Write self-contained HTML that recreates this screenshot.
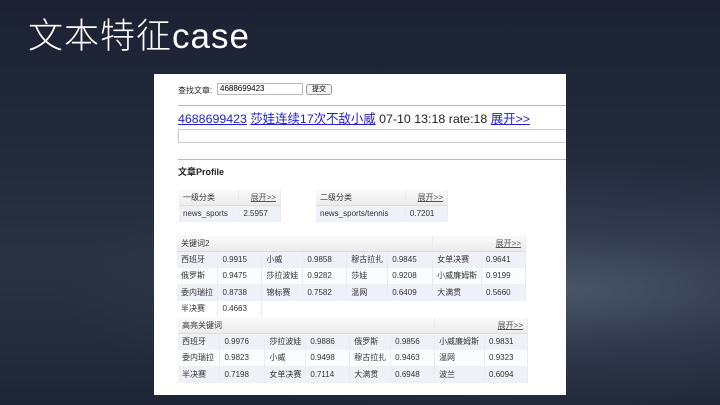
<!DOCTYPE html>
<html><head><meta charset="utf-8"><style>
*{margin:0;padding:0;box-sizing:border-box}
body{width:720px;height:405px;overflow:hidden;position:relative;font-family:"Liberation Sans","Noto Sans CJK SC",sans-serif;
background:radial-gradient(ellipse 500px 130px at 560px 290px,#4a5568 0%,rgba(60,70,90,0.5) 45%,rgba(0,0,0,0) 100%),linear-gradient(180deg,#1c2233 0%,#222a3c 40%,#2a3244 65%,#1e2536 100%)}
.t{position:absolute;left:28px;top:8px;color:#fff;font-size:35px;font-family:"Liberation Sans","Noto Sans CJK SC",sans-serif;font-weight:300;letter-spacing:1px}
.p{position:absolute;left:154px;top:74px;width:412px;height:321px;background:#fff}
.a{position:absolute;color:#222;font-size:8px;white-space:nowrap}
a{color:#22c;text-decoration:underline}
table{position:absolute;border-collapse:collapse;font-size:8px;color:#333}
td{height:16.5px;padding-left:4px;white-space:nowrap;border-right:1px solid #e8ecf4}
tr.h td{height:15px;background:linear-gradient(#fafafa,#ececec);border-bottom:1px solid #ddd}
tr.r td{background:#eef1f8}
tr.r:nth-child(odd) td{background:#fbfcfe}
.x{color:#555;text-decoration:underline;text-align:right;padding-right:4px}
</style></head><body>
<div class="t">文本特征case</div>
<div class="p">
<div class="a" style="left:24px;top:11px;font-size:8px">查找文章:</div>
<div style="position:absolute;left:63px;top:9px;width:86px;height:12px;border:1px solid #bbb;font-size:8px;padding-left:2px;line-height:10px">4688699423</div>
<div style="position:absolute;left:152px;top:10px;width:26px;height:11px;border:1px solid #999;border-radius:3px;font-size:7px;text-align:center;line-height:9px;background:#f4f4f4">提交</div>
<div style="position:absolute;left:24px;top:31px;width:388px;height:1px;background:#bbb"></div>
<div class="a" style="left:24px;top:35px;font-size:12.4px"><a>4688699423</a> <a>莎娃连续17次不敌小威</a> 07-10 13:18 rate:18 <a>展开&gt;&gt;</a></div>
<div style="position:absolute;left:24px;top:55px;width:388px;height:14px;border:1px solid #ccc;border-right:none"></div>
<div style="position:absolute;left:24px;top:85px;width:388px;height:1px;background:#bbb"></div>
<div class="a" style="left:24px;top:91px;font-size:9px;font-weight:bold">文章Profile</div>
<table style="left:25px;top:116px;width:102px"><tr class="h"><td>一级分类</td><td class="x">展开&gt;&gt;</td></tr><tr class="r"><td>news_sports</td><td>2.5957</td></tr></table>
<table style="left:162px;top:116px;width:132px"><tr class="h"><td>二级分类</td><td class="x">展开&gt;&gt;</td></tr><tr class="r"><td>news_sports/tennis</td><td>0.7201</td></tr></table>
<table style="left:23px;top:162px;width:349px">
<colgroup><col style="width:41px"><col style="width:44px"><col style="width:41px"><col style="width:44px"><col style="width:41px"><col style="width:45px"><col style="width:49px"><col style="width:44px"></colgroup>
<tr class="h"><td colspan="6">关键词2</td><td colspan="2" class="x">展开&gt;&gt;</td></tr>
<tr class="r"><td>西班牙</td><td>0.9915</td><td>小威</td><td>0.9858</td><td>穆古拉扎</td><td>0.9845</td><td>女单决赛</td><td>0.9641</td></tr>
<tr class="r"><td>俄罗斯</td><td>0.9475</td><td>莎拉波娃</td><td>0.9282</td><td>莎娃</td><td>0.9208</td><td>小威廉姆斯</td><td>0.9199</td></tr>
<tr class="r"><td>委内瑞拉</td><td>0.8738</td><td>锦标赛</td><td>0.7582</td><td>温网</td><td>0.6409</td><td>大满贯</td><td>0.5660</td></tr>
<tr><td style="background:#fff">半决赛</td><td style="background:#fff">0.4663</td><td colspan="6" style="border:none"></td></tr>
</table>
<table style="left:24px;top:244px;width:350px">
<colgroup><col style="width:42px"><col style="width:45px"><col style="width:41px"><col style="width:44px"><col style="width:41px"><col style="width:44px"><col style="width:50px"><col style="width:43px"></colgroup>
<tr class="h"><td colspan="6">高亮关键词</td><td colspan="2" class="x">展开&gt;&gt;</td></tr>
<tr class="r"><td>西班牙</td><td>0.9976</td><td>莎拉波娃</td><td>0.9886</td><td>俄罗斯</td><td>0.9856</td><td>小威廉姆斯</td><td>0.9831</td></tr>
<tr class="r"><td>委内瑞拉</td><td>0.9823</td><td>小威</td><td>0.9498</td><td>穆古拉扎</td><td>0.9463</td><td>温网</td><td>0.9323</td></tr>
<tr class="r"><td>半决赛</td><td>0.7198</td><td>女单决赛</td><td>0.7114</td><td>大满贯</td><td>0.6948</td><td>波兰</td><td>0.6094</td></tr>
</table>
</div>
</body></html>
